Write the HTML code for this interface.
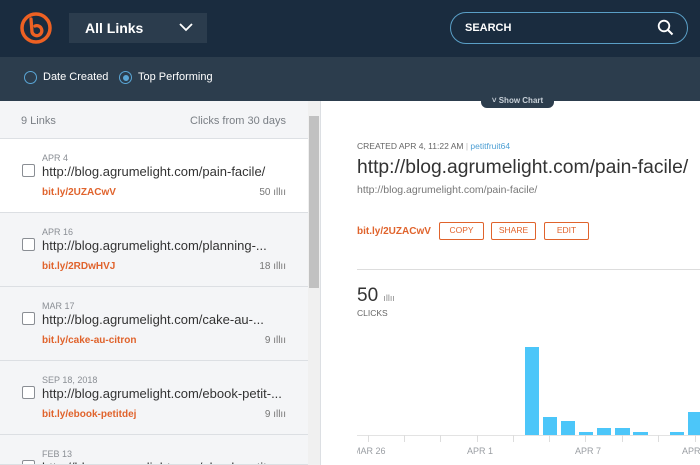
<!DOCTYPE html>
<html><head><meta charset="utf-8"><style>
*{margin:0;padding:0;box-sizing:border-box}
html,body{width:700px;height:465px;overflow:hidden}
body{font-family:"Liberation Sans",sans-serif;background:#fff;position:relative}
#w{position:absolute;left:0;top:0;width:700px;height:465px;overflow:hidden}
.abs{position:absolute}
.hdr{left:0;top:0;width:700px;height:57px;background:#1a2c3f}
.sub{left:0;top:57px;width:700px;height:44px;background:#2c3d4d}
.dd{left:69px;top:13px;width:138px;height:30px;background:#2b3c4d;color:#fff;font-weight:bold;font-size:14px;line-height:30px;padding-left:16px}
.search{left:450px;top:12px;width:238px;height:32px;border:1.5px solid #5a9fc6;border-radius:16px;color:#fff;font-size:11px;font-weight:bold;line-height:31px;padding-left:14px}
.radio{width:13px;height:13px;border:1.5px solid #5aa6d6;border-radius:50%}
.rl{color:#fff;font-size:11px}
.lh{left:0;top:101px;width:308px;height:38px;background:#f4f5f7;border-bottom:1px solid #dde0e4;font-size:11px;color:#7a7f85;line-height:40px}
.item{left:0;width:308px;height:74px;background:#f4f5f7;border-bottom:1px solid #dcdfe3;overflow:hidden}
.item .d{position:absolute;left:42px;top:14px;font-size:9px;color:#8a8e94}
.item .u{position:absolute;left:42px;top:25px;font-size:13px;color:#333}
.item .b{position:absolute;left:42px;top:48px;font-size:10px;color:#e0632c;font-weight:bold}
.item .c{position:absolute;right:22px;top:48px;font-size:10px;color:#777}
.item .cb{position:absolute;left:22px;top:25px;width:13px;height:13px;border:1px solid #8a8e94;border-radius:2px;background:#fff}
.btn{top:222px;height:18px;border:1.5px solid #e0632c;border-radius:2px;color:#e0632c;font-size:8.5px;text-align:center;line-height:15px}
.bar{background:#4cc6f9;position:absolute}
.tick{position:absolute;top:435px;width:1px;height:7px;background:#ddd}
.xl{position:absolute;top:0;font-size:9px;color:#9a9ea3;white-space:nowrap}
</style></head><body><div id="w">
<div class="abs hdr"></div>
<svg class="abs" style="left:19px;top:11px" width="34" height="34" viewBox="0 0 34 34"><circle cx="17" cy="17" r="14" fill="none" stroke="#ee6123" stroke-width="3.5"/><path d="M12 8 L13 21 A5 5 0 1 0 16 15" fill="none" stroke="#ee6123" stroke-width="3.3" stroke-linecap="round"/></svg>
<div class="abs dd">All Links</div>
<svg class="abs" style="left:179px;top:22px" width="14" height="10"><path d="M1 2 L7 8 L13 2" fill="none" stroke="#fff" stroke-width="1.8"/></svg>
<div class="abs search">SEARCH</div>
<svg class="abs" style="left:657px;top:19px" width="17" height="17"><circle cx="7" cy="7" r="5.3" fill="none" stroke="#fff" stroke-width="1.8"/><path d="M11 11 L15.5 15.5" stroke="#fff" stroke-width="2"/></svg>
<div class="abs sub"></div>
<div class="abs radio" style="left:24px;top:71px"></div>
<div class="abs rl" style="left:43px;top:71px">Date Created</div>
<div class="abs radio" style="left:119px;top:71px"></div>
<div class="abs" style="left:123px;top:75px;width:6px;height:6px;border-radius:50%;background:#5aa6d6"></div>
<div class="abs rl" style="left:138px;top:71px">Top Performing</div>
<div class="abs lh"><span style="position:absolute;left:21px">9 Links</span><span style="position:absolute;right:22px">Clicks from 30 days</span></div>
<div class="abs item" style="top:139px;background:#fff"><div class="cb"></div><div class="d">APR 4</div><div class="u">http://blog.agrumelight.com/pain-facile/</div><div class="b">bit.ly/2UZACwV</div><div class="c">50 ıllıı</div></div>
<div class="abs item" style="top:213px"><div class="cb"></div><div class="d">APR 16</div><div class="u">http://blog.agrumelight.com/planning-...</div><div class="b">bit.ly/2RDwHVJ</div><div class="c">18 ıllıı</div></div>
<div class="abs item" style="top:287px"><div class="cb"></div><div class="d">MAR 17</div><div class="u">http://blog.agrumelight.com/cake-au-...</div><div class="b">bit.ly/cake-au-citron</div><div class="c">9 ıllıı</div></div>
<div class="abs item" style="top:361px"><div class="cb"></div><div class="d">SEP 18, 2018</div><div class="u">http://blog.agrumelight.com/ebook-petit-...</div><div class="b">bit.ly/ebook-petitdej</div><div class="c">9 ıllıı</div></div>
<div class="abs item" style="top:435px;height:30px"><div class="cb"></div><div class="d">FEB 13</div><div class="u">http://blog.agrumelight.com/ebook-petit-...</div></div>
<div class="abs" style="left:308px;top:101px;width:12px;height:364px;background:#f0f0f0"></div>
<div class="abs" style="left:309px;top:116px;width:10px;height:172px;background:#c1c1c1"></div>
<div class="abs" style="left:320px;top:101px;width:1px;height:364px;background:#dcdfe3"></div>
<div class="abs" style="left:481px;top:95px;width:73px;height:13px;background:#2c3d4d;border-radius:0 0 6px 6px;color:#c8d0d8;font-size:8px;font-weight:bold;text-align:center;line-height:12px">˅ Show Chart</div>
<div class="abs" style="left:357px;top:141px;font-size:8.5px;color:#666">CREATED APR 4, 11:22 AM <span style="color:#bbb">|</span> <span style="color:#4d9fd4">petitfruit64</span></div>
<div class="abs" style="left:357px;top:157px;font-size:19.3px;color:#333;white-space:nowrap">http://blog.agrumelight.com/pain-facile/</div>
<div class="abs" style="left:357px;top:184px;font-size:10.5px;color:#777">http://blog.agrumelight.com/pain-facile/</div>
<div class="abs" style="left:357px;top:226px;font-size:10px;color:#e0632c;font-weight:bold">bit.ly/2UZACwV</div>
<div class="abs btn" style="left:439px;width:45px">COPY</div>
<div class="abs btn" style="left:491px;width:45px">SHARE</div>
<div class="abs btn" style="left:544px;width:45px">EDIT</div>
<div class="abs" style="left:357px;top:269px;width:343px;height:1px;background:#ddd"></div>
<div class="abs" style="left:357px;top:285px;font-size:19px;color:#333">50 <span style="font-size:9px;color:#888">ıllıı</span></div>
<div class="abs" style="left:357px;top:308px;font-size:8.5px;color:#666">CLICKS</div>
<div class="bar" style="left:525px;top:347px;width:14px;height:88px"></div>
<div class="bar" style="left:543px;top:417px;width:14px;height:18px"></div>
<div class="bar" style="left:561px;top:421px;width:14px;height:14px"></div>
<div class="bar" style="left:579px;top:432px;width:14px;height:3px"></div>
<div class="bar" style="left:597px;top:428px;width:14px;height:7px"></div>
<div class="bar" style="left:615px;top:428px;width:15px;height:7px"></div>
<div class="bar" style="left:633px;top:432px;width:15px;height:3px"></div>
<div class="bar" style="left:670px;top:432px;width:14px;height:3px"></div>
<div class="bar" style="left:688px;top:412px;width:12px;height:23px"></div>
<div class="abs" style="left:357px;top:435px;width:343px;height:1px;background:#e3e3e3"></div>
<div class="tick" style="left:368px"></div><div class="tick" style="left:404px"></div><div class="tick" style="left:440px"></div><div class="tick" style="left:477px"></div><div class="tick" style="left:513px"></div><div class="tick" style="left:549px"></div><div class="tick" style="left:585px"></div><div class="tick" style="left:622px"></div><div class="tick" style="left:658px"></div><div class="tick" style="left:695px"></div>
<div class="abs" style="left:357px;top:446px;width:343px;height:19px;overflow:hidden">
<div class="xl" style="left:-4px">MAR 26</div><div class="xl" style="left:110px">APR 1</div><div class="xl" style="left:218px">APR 7</div><div class="xl" style="left:325px">APR 13</div></div>
</div></body></html>
